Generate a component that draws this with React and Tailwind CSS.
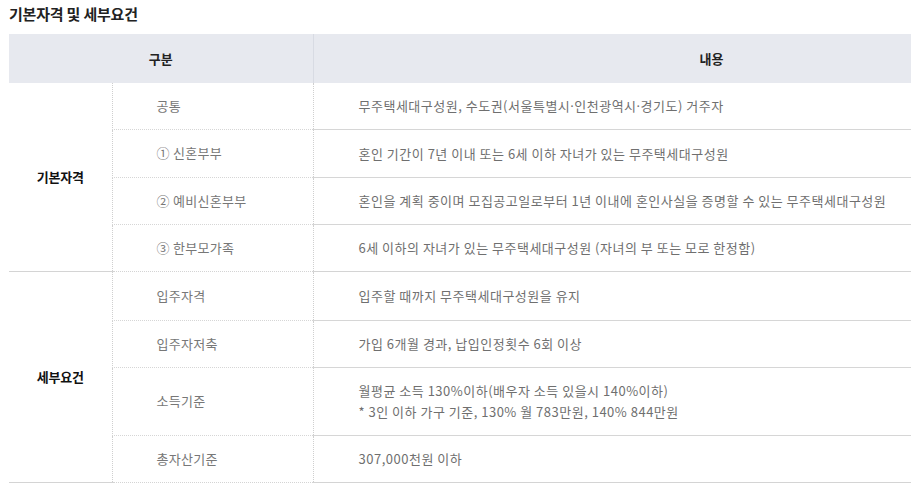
const Dot = () => <span className="font-['Noto_Sans']">·</span>;

const basic = [
  {
    label: "공통",
    text: (
      <>
        무주택세대구성원, 수도권(서울특별시
        <Dot />
        인천광역시
        <Dot />
        경기도) 거주자
      </>
    ),
    h: "h-[46px]",
  },
  { label: "① 신혼부부", text: "혼인 기간이 7년 이내 또는 6세 이하 자녀가 있는 무주택세대구성원", h: "h-[48px]" },
  { label: "② 예비신혼부부", text: "혼인을 계획 중이며 모집공고일로부터 1년 이내에 혼인사실을 증명할 수 있는 무주택세대구성원", h: "h-[47px]" },
  { label: "③ 한부모가족", text: "6세 이하의 자녀가 있는 무주택세대구성원 (자녀의 부 또는 모로 한정함)", h: "h-[47px]" },
];

const detail = [
  { label: "입주자격", text: "입주할 때까지 무주택세대구성원을 유지", h: "h-[49px]" },
  { label: "입주자저축", text: "가입 6개월 경과, 납입인정횟수 6회 이상", h: "h-[47px]" },
  {
    label: "소득기준",
    text: (
      <>
        <div>월평균 소득 130%이하(배우자 소득 있을시 140%이하)</div>
        <div>* 3인 이하 가구 기준, 130% 월 783만원, 140% 844만원</div>
      </>
    ),
    h: "h-[68px]",
  },
  { label: "총자산기준", text: "307,000천원 이하", h: "h-[47px]" },
];

function Group({ title, rows }) {
  return rows.map((row, i) => {
    const last = i === rows.length - 1;
    return (
      <tr key={row.label} className={row.h}>
        {i === 0 && (
          <td
            rowSpan={rows.length}
            className="border-b border-[#d4d4d4] text-center align-middle text-[13px] font-bold tracking-[-0.2px] text-[#111]"
          >
            {title}
          </td>
        )}
        <td
          className={
            "border-l border-r border-dotted border-[#cfcfcf] pl-[44px] align-middle text-[13px] tracking-[0.3px] text-[#777] " +
            (last ? "border-b border-b-[#d4d4d4]" : "border-b border-b-[#d6d6d6]")
          }
        >
          {row.label}
        </td>
        <td
          className={
            "pl-[45px] align-middle text-[13px] leading-[21px] tracking-[0.5px] text-[#6f6f6f] " +
            (last ? "border-b border-[#d4d4d4]" : "border-b border-[#d6d6d6]")
          }
        >
          {row.text}
        </td>
      </tr>
    );
  });
}

export default function App() {
  return (
    <div
      className="w-[922px] h-[492px] overflow-hidden bg-white pl-[9px]"
      style={{ fontFamily: '"Noto Sans CJK KR", "Noto Sans", sans-serif' }}
    >
      <h2 className="pt-[3px] h-[34px] text-[15px] leading-[22px] font-bold tracking-[-0.2px] text-[#222]">
        기본자격 및 세부요건
      </h2>
      <table className="w-[902px] table-fixed border-collapse">
        <colgroup>
          <col className="w-[103px]" />
          <col className="w-[201px]" />
          <col />
        </colgroup>
        <thead>
          <tr className="h-[49px] bg-[#e7e9ef]">
            <th colSpan={2} className="border-r border-[#d8dbe3] text-center text-[13px] font-bold text-[#222]">
              구분
            </th>
            <th className="pl-[386px] text-left text-[13px] font-bold text-[#222]">내용</th>
          </tr>
        </thead>
        <tbody>
          <Group title="기본자격" rows={basic} />
          <Group title="세부요건" rows={detail} />
        </tbody>
      </table>
    </div>
  );
}
